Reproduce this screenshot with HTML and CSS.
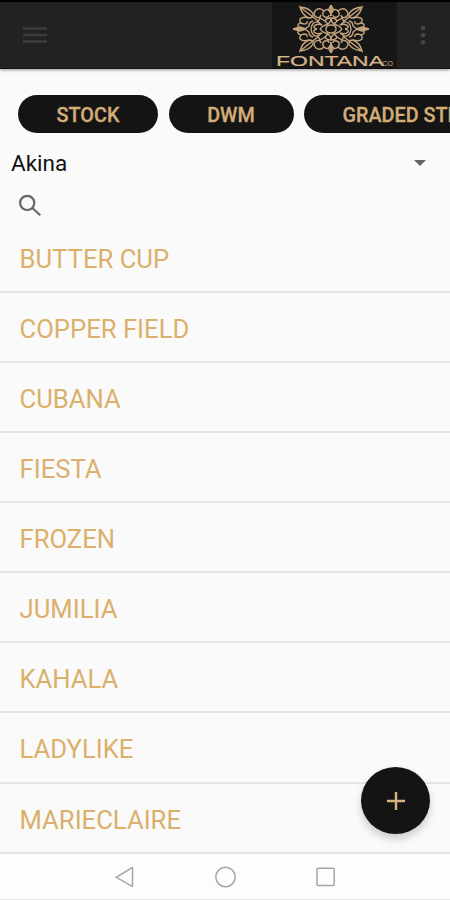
FILE: index.html
```html
<!DOCTYPE html>
<html lang="en">
<head>
    <meta charset="utf-8" />
    <title>Fontana</title>
    <link rel="stylesheet" href="styles.css">
</head>
<body>
    <header class="topbar">
        <svg class="menu" width="24" height="18" viewBox="0 0 24 18"><path d="M0 2.5h24M0 9h24M0 15.5h24"/></svg>
        <div class="logo">
            <svg width="125" height="67" viewBox="272 2 125 67">
                <defs>
                    <g id="quarter">
                        <path d="M0 -24L2.5 -19L0 -15M38 0L31 -2L25 0M0 -24V-13M38 0H27"/>
                        <path d="M0 -18Q4 -21 7 -18Q10 -14 6 -12Q2 -11 2 -14M7 -18Q11 -22 15 -19Q19 -15 15 -12Q11 -10 10 -14"/>
                        <path d="M31 -22Q21 -21 18 -15Q17 -11 22 -11Q29 -14 31 -22L13 -8"/>
                        <path d="M22 -11Q28 -13 31 -10Q32 -6 27 -5Q23 -5 24 -8M30 -6Q35 -5 32 -1M18 -8Q22 -7 22 -3L26 0"/>
                        <path d="M0 -11Q5 -11 6 -8L3 -5Q0 -7 0 -11M6 -8L11 -11L13 -7L9 -4Q14 -6 17 -3Q18 -1 14 0M3 -5L8 -3L11 0"/>
                        <path d="M0 -4Q5 -4 5 0M13 -7Q19 -8 20 0"/>
                    </g>
                    <g id="half">
                        <use href="#quarter"/>
                        <use href="#quarter" transform="scale(-1 1)"/>
                    </g>
                </defs>
                <g class="ornament" transform="translate(331 29)">
                    <use href="#half"/>
                    <use href="#half" transform="scale(1 -1)"/>
                </g>
                <text class="brand" x="276" y="65.5" textLength="108" lengthAdjust="spacingAndGlyphs">FONTANA</text>
                <text class="brand-co" x="382" y="65.5" textLength="11" lengthAdjust="spacingAndGlyphs">CO</text>
            </svg>
        </div>
        <svg class="more" width="8" height="22" viewBox="0 0 8 22"><circle cx="4" cy="4" r="2.3"/><circle cx="4" cy="11.3" r="2.3"/><circle cx="4" cy="18.3" r="2.3"/></svg>
    </header>

    <nav class="tabs">
        <a class="tab stock">STOCK</a>
        <a class="tab dwm">DWM</a>
        <a class="tab graded">GRADED STEMS</a>
    </nav>

    <div class="select">
        <span>Akina</span>
        <svg width="12" height="6" viewBox="0 0 12 6"><path d="M0 0h12L6 6z"/></svg>
    </div>

    <div class="search">
        <svg width="24" height="24" viewBox="0 0 24 24"><circle cx="9.2" cy="8.9" r="7.1"/><path d="M14.3 14l8 7.2"/></svg>
    </div>

    <ul class="list">
        <li>BUTTER CUP</li>
        <li>COPPER FIELD</li>
        <li>CUBANA</li>
        <li>FIESTA</li>
        <li>FROZEN</li>
        <li>JUMILIA</li>
        <li>KAHALA</li>
        <li>LADYLIKE</li>
        <li>MARIECLAIRE</li>
    </ul>

    <a class="fab"><svg width="20" height="20" viewBox="0 0 20 20"><path d="M10 1v18M1 10h18"/></svg></a>

    <footer class="navbar">
        <svg width="20" height="22" viewBox="0 0 20 22"><path d="M18.5 2.2v17.6q0 .8-.8.4L2.3 11.3L17.7 1.8q.8-.4.8.4z"/></svg>
        <svg width="22" height="22" viewBox="0 0 22 22"><circle cx="11.5" cy="11" r="9.7"/></svg>
        <svg width="20" height="20" viewBox="0 0 20 20"><rect x="1" y="1.2" width="17.2" height="17.2" rx="1"/></svg>
    </footer>
</body>
</html>
```

FILE: styles.css
```css
*{box-sizing:border-box;}
html,body{margin:0;padding:0;}
body{width:450px;height:900px;overflow:hidden;position:relative;display:flex;flex-direction:column;background:#fafafa;font-family:Roboto,"Liberation Sans",sans-serif;}
svg{display:block;flex:none;}

/* header */
.topbar{height:69px;flex:none;display:flex;align-items:center;background:#222;border-top:2px solid #000;border-bottom:1px solid #111;padding-left:23px;box-shadow:0 1px 3px rgba(0,0,0,.4);}
.menu{stroke:#3c3c3c;stroke-width:2.3;fill:none;}
.logo{margin-left:225px;width:125px;height:66px;background:#161616;overflow:hidden;}
.ornament{fill:none;stroke:#c5a57e;stroke-width:1.4;}
.brand{font-family:"Liberation Sans",sans-serif;font-size:14px;fill:#d6b58b;stroke:#d6b58b;stroke-width:.2;}
.brand-co{font-family:"Liberation Sans",sans-serif;font-size:7.5px;fill:#d6b58b;}
.more{margin-left:22px;fill:#464646;}

/* buttons */
.tabs{height:64px;flex:none;padding:26px 0 0 18px;display:flex;gap:10.5px;overflow:hidden;}
.tab{height:38px;line-height:41px;flex:none;border-radius:19px;background:#141414;color:#d3ad77;font-size:19.8px;font-weight:500;-webkit-text-stroke:.3px #d3ad77;text-align:center;white-space:nowrap;}
.stock{width:140px;}
.dwm{width:125px;}
.graded{width:212px;text-align:left;padding-left:38.5px;}

.select{height:60px;flex:none;display:flex;align-items:center;justify-content:space-between;padding:0 24px 0 11px;font-size:22.5px;color:#111;}
.select svg{fill:#666;}
.search{height:29.5px;flex:none;padding:1px 0 0 18px;}
.search svg{fill:none;stroke:#666;stroke-width:2.2;}

/* list */
.list{list-style:none;margin:0;padding:0;}
.list li{height:70.15px;line-height:72px;padding-left:19.5px;font-size:25.65px;color:#dbb06b;border-bottom:2px solid #e4e4e4;}

.fab{position:absolute;left:361px;top:767px;width:69px;height:67px;border-radius:50%;background:#141414;display:flex;align-items:center;justify-content:center;box-shadow:0 5px 8px rgba(0,0,0,.18);}
.fab svg{stroke:#d8b17c;stroke-width:2.4;}

.navbar{flex:1;display:flex;align-items:center;justify-content:center;gap:80px;background:#fdfdfd;border-bottom:1px solid #e4e4e4;padding-top:1px;}
.navbar svg{fill:none;stroke:#a6a6a6;stroke-width:1.5;}
```
